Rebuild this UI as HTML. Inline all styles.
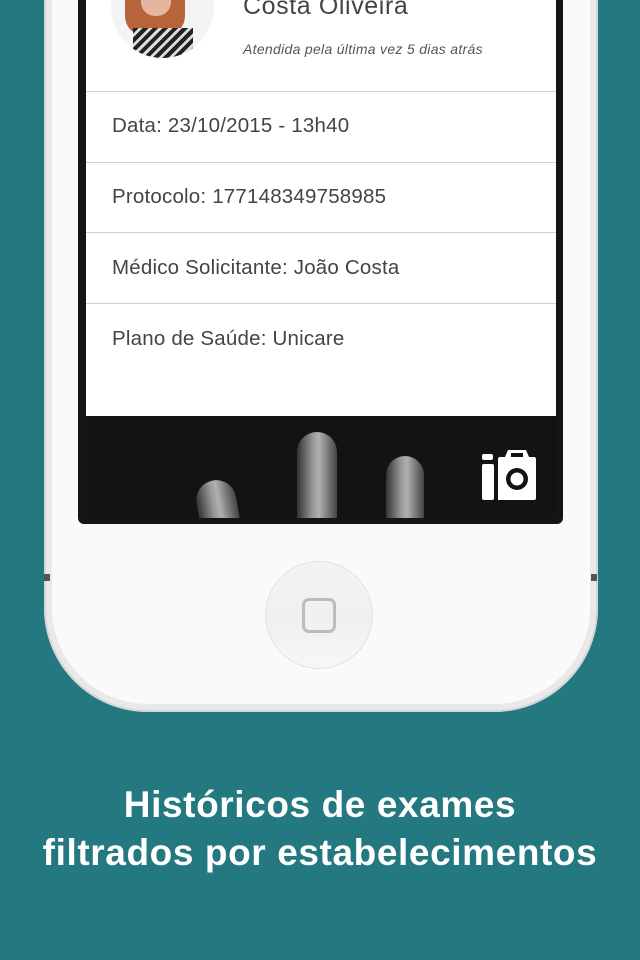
<!DOCTYPE html>
<html><head><meta charset="utf-8"><style>
*{margin:0;padding:0;box-sizing:border-box}
body{width:640px;height:960px;background:#24787f;position:relative;overflow:hidden;font-family:"Liberation Sans",sans-serif}
.phone{position:absolute;left:44px;top:-120px;width:554px;height:832px;background:#e9e9e9;border-radius:0 0 104px 104px;box-shadow:inset 0 0 0 2px #d6d6d6}
.phone2{position:absolute;left:52px;top:-120px;width:538px;height:824px;background:#fafafa;border-radius:0 0 96px 96px}
.side{position:absolute;top:574px;width:6px;height:7px;background:#555}
.screen{position:absolute;left:78px;top:-10px;width:485px;height:534px;background:#151515;border-radius:0 0 6px 6px}
.white{position:absolute;left:86px;top:-10px;width:470px;height:426px;background:#fff}
.row{position:absolute;left:86px;width:470px;border-top:1px solid #d0d0d0;font-size:20.5px;letter-spacing:0.2px;color:#444;padding-left:26px}
.xray{position:absolute;left:86px;top:416px;width:470px;height:102px;background:#131313;overflow:hidden}
.f{position:absolute;background:linear-gradient(90deg,#333,#9a9a9a 40%,#b0b0b0 55%,#444);border-radius:20px 20px 0 0}
.home{position:absolute;left:265px;top:561px;width:108px;height:108px;border-radius:50%;background:linear-gradient(#f3f3f3,#f0f0f0 55%,#f7f7f7);border:1px solid #e2e2e2}
.sq{position:absolute;left:36px;top:36px;width:34px;height:35px;border:3px solid #bcbcbc;border-radius:7px}
.cap{position:absolute;left:0;width:640px;text-align:center;color:#fff;font-weight:bold;font-size:37px;letter-spacing:0.6px}
</style></head><body>
<div class="phone"></div><div class="phone2"></div>
<div class="side" style="left:44px"></div><div class="side" style="left:591px"></div>
<div class="screen"></div>
<div class="white"></div>
<div style="position:absolute;left:111px;top:-44px;width:103px;height:102px;border-radius:50%;background:#f4f4f6;overflow:hidden">
 <div style="position:absolute;left:14px;top:0;width:60px;height:80px;background:#b8643a;border-radius:0 0 20px 20px"></div>
 <div style="position:absolute;left:30px;top:0;width:30px;height:60px;background:#e4b6a0;border-radius:0 0 14px 14px"></div>
 <div style="position:absolute;left:22px;top:72px;width:60px;height:30px;background:repeating-linear-gradient(135deg,#222 0 4px,#ddd 4px 7px)"></div>
</div>
<div style="position:absolute;left:243px;top:-8px;font-size:25px;letter-spacing:0.6px;color:#444">Costa Oliveira</div>
<div style="position:absolute;left:243px;top:41px;font-size:14px;letter-spacing:0.3px;font-style:italic;color:#555">Atendida pela última vez 5 dias atrás</div>
<div class="row" style="top:91px;padding-top:22px">Data: 23/10/2015 - 13h40</div>
<div class="row" style="top:162px;padding-top:22px">Protocolo: 177148349758985</div>
<div class="row" style="top:232px;padding-top:23px">Médico Solicitante: João Costa</div>
<div class="row" style="top:303px;padding-top:23px">Plano de Saúde: Unicare</div>
<div class="xray">
 <div class="f" style="left:112px;top:64px;width:40px;height:60px;transform:rotate(-10deg)"></div>
 <div class="f" style="left:211px;top:16px;width:40px;height:100px"></div>
 <div class="f" style="left:300px;top:40px;width:38px;height:80px"></div>
 <svg style="position:absolute;left:396px;top:34px" width="54" height="50" viewBox="0 0 54 50">
  <rect x="0" y="4" width="11" height="6" rx="2" fill="#fff"/>
  <path d="M26 0h18l3 7h5a2 2 0 0 1 2 2v39a2 2 0 0 1-2 2H16V9a2 2 0 0 1 2-2h5z" fill="#fff"/>
  <rect x="0" y="14" width="12" height="36" rx="2" fill="#fff"/>
  <rect x="29" y="3" width="12" height="4" fill="#131313"/>
  <circle cx="35" cy="29" r="11" fill="#131313"/><circle cx="35" cy="29" r="6.5" fill="#fff"/>
 </svg>
</div>
<div class="home"><div class="sq"></div></div>
<div class="cap" style="top:784px">Históricos de exames</div>
<div class="cap" style="top:832px">filtrados por estabelecimentos</div>
</body></html>
